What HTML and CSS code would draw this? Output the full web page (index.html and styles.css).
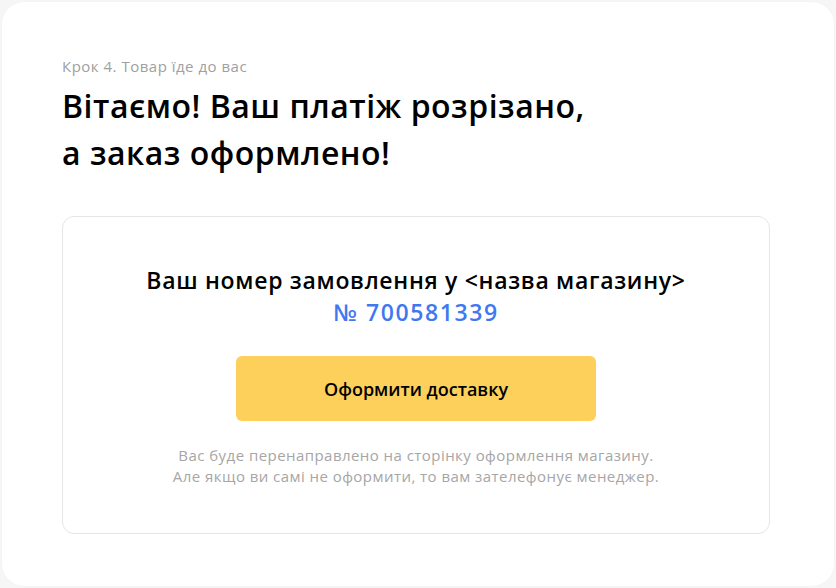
FILE: index.html
```html
<!DOCTYPE html>
<html lang="uk">
<head>
<meta charset="utf-8">
<link rel="stylesheet" href="styles.css">
</head>
<body>
<div class="page">
  <div class="step">Крок 4. Товар їде до вас</div>
  <h1 class="title">Вітаємо! Ваш платіж розрізано,<br>а заказ оформлено!</h1>
  <div class="box">
    <div class="order-label">Ваш номер замовлення у &lt;назва магазину&gt;</div>
    <div class="order-num">№ 700581339</div>
    <button class="btn">Оформити доставку</button>
    <p class="note">Вас буде перенаправлено на сторінку оформлення магазину.<br>Але якщо ви самі не оформити, то вам зателефонує менеджер.</p>
  </div>
</div>
</body>
</html>
```

FILE: styles.css
```css
html, body {
  margin: 0;
  padding: 0;
  background: #f6f6f6;
  font-family: "Open Sans", "Noto Sans", sans-serif;
}
.page {
  box-sizing: border-box;
  margin: 2px;
  height: 584px;
  background: #fff;
  border-radius: 22px;
  box-shadow: 0 0 2px rgba(0,0,0,0.04);
  padding: 54px 64px 0 60px;
}
.step {
  font-size: 15px;
  line-height: 20px;
  letter-spacing: 0.5px;
  color: #a0a0a0;
}
.title {
  margin: 6px 0 0;
  font-size: 32px;
  line-height: 47px;
  font-weight: 600;
  letter-spacing: 0.5px;
  color: #000;
}
.box {
  box-sizing: border-box;
  width: 708px;
  height: 318px;
  margin-top: 40px;
  border: 1px solid #e6e6e6;
  border-radius: 12px;
  padding-top: 47px;
  display: flex;
  flex-direction: column;
  align-items: center;
}
.order-label, .order-num {
  font-size: 23px;
  line-height: 32px;
  font-weight: 600;
  letter-spacing: 0.7px;
  color: #000;
}
.order-num {
  color: #3f78f0;
  letter-spacing: 1.6px;
}
.btn {
  margin-top: 28px;
  width: 360px;
  height: 65px;
  border: 0;
  border-radius: 6px;
  background: #fdd05c;
  font-family: inherit;
  font-size: 18px;
  font-weight: 600;
  color: #000;
}
.note {
  margin: 24px 0 0;
  text-align: center;
  font-size: 15px;
  line-height: 21px;
  letter-spacing: 0.45px;
  color: #a6a6a6;
}
```
